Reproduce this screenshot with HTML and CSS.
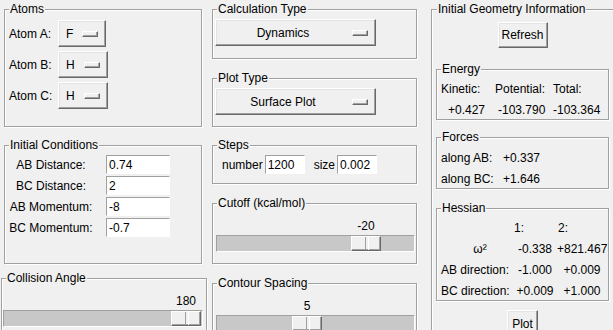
FILE: index.html
```html
<!DOCTYPE html>
<html lang="en">
<head>
    <meta charset="UTF-8">
    <title>LEPS Surface</title>
    <link rel="stylesheet" href="styles.css">
</head>
<body>
    <div class="app">
        <!-- left column -->
        <div class="col col-left">
            <fieldset class="frame atoms">
                <legend>Atoms</legend>
                <div class="atom-grid">
                    <label>Atom A:</label>
                    <button class="menubtn"><span class="txt">F</span><span class="ind"></span></button>
                    <label>Atom B:</label>
                    <button class="menubtn"><span class="txt">H</span><span class="ind"></span></button>
                    <label>Atom C:</label>
                    <button class="menubtn"><span class="txt">H</span><span class="ind"></span></button>
                </div>
            </fieldset>

            <fieldset class="frame initial">
                <legend>Initial Conditions</legend>
                <div class="entry-grid">
                    <label>AB Distance:</label><input class="entry" value="0.74">
                    <label>BC Distance:</label><input class="entry" value="2">
                    <label>AB Momentum:</label><input class="entry" value="-8">
                    <label>BC Momentum:</label><input class="entry" value="-0.7">
                </div>
            </fieldset>

            <fieldset class="frame collision">
                <legend>Collision Angle</legend>
                <div class="scale" style="--pos:167px">
                    <div class="scale-val">180</div>
                    <div class="trough"><span class="thumb"></span></div>
                </div>
            </fieldset>
        </div>

        <!-- middle column -->
        <div class="col col-mid">
            <fieldset class="frame calc">
                <legend>Calculation Type</legend>
                <button class="menubtn wide"><span class="txt">Dynamics</span><span class="ind"></span></button>
            </fieldset>

            <fieldset class="frame plot">
                <legend>Plot Type</legend>
                <button class="menubtn wide"><span class="txt">Surface Plot</span><span class="ind"></span></button>
            </fieldset>

            <fieldset class="frame steps">
                <legend>Steps</legend>
                <div class="steps-row">
                    <label>number</label><input class="entry small" value="1200">
                    <label class="size-lbl">size</label><input class="entry small" value="0.002">
                </div>
            </fieldset>

            <fieldset class="frame cutoff">
                <legend>Cutoff (kcal/mol)</legend>
                <div class="scale" style="--pos:134px">
                    <div class="scale-val">-20</div>
                    <div class="trough"><span class="thumb"></span></div>
                </div>
            </fieldset>

            <fieldset class="frame contour">
                <legend>Contour Spacing</legend>
                <div class="scale" style="--pos:75px">
                    <div class="scale-val">5</div>
                    <div class="trough"><span class="thumb"></span></div>
                </div>
            </fieldset>
        </div>

        <!-- right column -->
        <div class="col col-right">
            <fieldset class="frame geom">
                <legend>Initial Geometry Information</legend>
                <button class="btn refresh">Refresh</button>

                <fieldset class="frame energy">
                    <legend>Energy</legend>
                    <div class="energy-grid">
                        <span>Kinetic:</span><span>Potential:</span><span>Total:</span>
                        <span class="v1">+0.427</span><span class="v2">-103.790</span><span>-103.364</span>
                    </div>
                </fieldset>

                <fieldset class="frame forces">
                    <legend>Forces</legend>
                    <div class="forces-grid">
                        <span>along AB:</span><span>+0.337</span>
                        <span>along BC:</span><span>+1.646</span>
                    </div>
                </fieldset>

                <fieldset class="frame hessian">
                    <legend>Hessian</legend>
                    <div class="hess-grid">
                        <span></span><span class="hd">1:</span><span class="hd">2:</span>
                        <span class="omega">ω²</span><span class="c">-0.338</span><span class="c">+821.467</span>
                        <span>AB direction:</span><span class="c">-1.000</span><span class="c">+0.009</span>
                        <span>BC direction:</span><span class="c">+0.009</span><span class="c">+1.000</span>
                    </div>
                </fieldset>

                <button class="btn plot-btn">Plot</button>
            </fieldset>
        </div>
    </div>
</body>
</html>
```

FILE: styles.css
```css
* {
    box-sizing: border-box;
}
body {
    margin: 0;
    width: 613px;
    height: 330px;
    overflow: hidden;
    background-color: #f0f0f0;
    font-family: "Liberation Sans", Arial, sans-serif;
    font-size: 12px;
    color: #000;
}
.app {
    display: flex;
    align-items: flex-start;
    padding-top: 2px;
}
.col {
    display: flex;
    flex-direction: column;
}
.col-left {
    margin-left: 4px;
    width: 198px;
}
.col-mid {
    margin-left: 10px;
    width: 205px;
}
.col-right {
    margin-left: 14px;
    width: 185px;
}

/* label frames (groove border) */
.frame {
    margin: 0;
    min-width: 0;
    padding: 2px 3px 0 3px;
    border: 1px solid #a0a0a0;
    box-shadow: 1px 1px 0 #fff, inset 1px 1px 0 #fff;
}
.frame legend {
    padding: 0 1px;
    margin-left: 1px;
    line-height: 15px;
    background-color: #f0f0f0;
}
.atoms { height: 125px; }
.initial { height: 126px; margin-top: 11px; }
.collision { height: 70px; margin-top: 7px; margin-left: -3px; width: 206px; }
.calc { height: 57px; }
.plot { height: 56px; margin-top: 12px; }
.steps { height: 46px; margin-top: 11px; }
.cutoff { height: 68px; margin-top: 12px; }
.contour { height: 60px; margin-top: 12px; }

/* buttons */
button {
    font: inherit;
    color: #000;
    padding: 0;
    margin: 0;
    background-color: #f0f0f0;
    border: 1px solid;
    border-color: #fff #696969 #696969 #fff;
    box-shadow: inset -1px -1px 0 #a0a0a0, inset 1px 1px 0 #e3e3e3;
}
.menubtn {
    display: flex;
    align-items: center;
    height: 27px;
    padding: 0 7px 0 7px;
}
.ind {
    width: 16px;
    height: 6px;
    margin-left: 9px;
    border: 1px solid;
    border-color: #fff #696969 #696969 #fff;
    box-shadow: inset -1px -1px 0 #a0a0a0;
}
.menubtn.wide {
    width: 161px;
    margin-left: -1px;
    padding-right: 7px;
}
.menubtn.wide .txt {
    flex: 1;
    text-align: center;
}
.btn {
    height: 26px;
}

.atom-grid {
    display: grid;
    grid-template-columns: 46px auto;
    column-gap: 3px;
    row-gap: 4px;
    align-items: center;
    justify-items: start;
    padding-left: 1px;
    padding-top: 1px;
}

/* entries */
.entry {
    width: 64px;
    height: 19px;
    padding: 0 2px;
    font: inherit;
    color: #000;
    background-color: #fff;
    border: 1px solid;
    border-color: #a0a0a0 #fff #fff #a0a0a0;
    outline: none;
}
.entry-grid {
    display: grid;
    grid-template-columns: 84px 64px;
    column-gap: 13px;
    row-gap: 2px;
    align-items: center;
    padding-left: 1px;
}
.entry-grid label {
    justify-self: center;
}
.steps-row {
    display: flex;
    align-items: center;
    padding-left: 6px;
}
.steps-row label {
    margin-right: 2px;
}
.entry.small {
    width: 40px;
}
.size-lbl {
    margin-left: 9px;
}

/* scales */
.scale {
    padding-top: 6px;
}
.scale-val {
    width: 30px;
    margin-left: calc(var(--pos) + 1px);
    text-align: center;
    line-height: 14px;
    margin-bottom: 2px;
}
.trough {
    position: relative;
    height: 17px;
    background-color: #c8c8c8;
    border: 1px solid;
    border-color: #a0a0a0 #fff #fff #a0a0a0;
}
.thumb {
    position: absolute;
    top: 0;
    left: var(--pos);
    width: 30px;
    height: 15px;
    background-color: #f0f0f0;
    border: 1px solid;
    border-color: #fff #696969 #696969 #fff;
    box-shadow: inset -1px -1px 0 #a0a0a0;
}
.thumb::after {
    content: "";
    position: absolute;
    left: 13px;
    top: 0;
    width: 2px;
    height: 13px;
    border-left: 1px solid #a0a0a0;
    border-right: 1px solid #fff;
}
.collision .scale {
    margin-left: -2px;
    width: 200px;
}
.cutoff .trough,
.contour .trough {
    width: 199px;
}

/* right column */
.geom {
    height: 340px;
    padding: 0 4px;
}
.refresh {
    display: block;
    width: 50px;
    margin: 5px auto 0;
}
.energy { width: 173px; height: 58px; margin-top: 14px; padding-left: 4px; }
.forces { width: 173px; height: 59px; margin-top: 10px; padding-left: 4px; }
.hessian { width: 173px; height: 100px; margin-top: 12px; padding-left: 4px; }
.energy legend,
.forces legend,
.hessian legend {
    margin-left: 0;
}
.energy-grid {
    display: grid;
    grid-template-columns: 54px 58px auto;
    line-height: 21px;
    padding-top: 0;
}
.energy-grid .v1 { padding-left: 7px; }
.energy-grid .v2 { padding-left: 3px; }
.forces-grid {
    display: grid;
    grid-template-columns: 62px auto;
    line-height: 21px;
    padding-top: 1px;
}
.hess-grid {
    display: grid;
    grid-template-columns: 72px 44px 50px;
    line-height: 21px;
}
.hess-grid .hd { padding-left: 1px; }
.hess-grid .c,
.hess-grid .omega { text-align: center; }
.hess-grid .omega { padding-left: 6px; }
.plot-btn {
    display: block;
    width: 31px;
    height: 27px;
    margin: 9px auto 0;
}
```
